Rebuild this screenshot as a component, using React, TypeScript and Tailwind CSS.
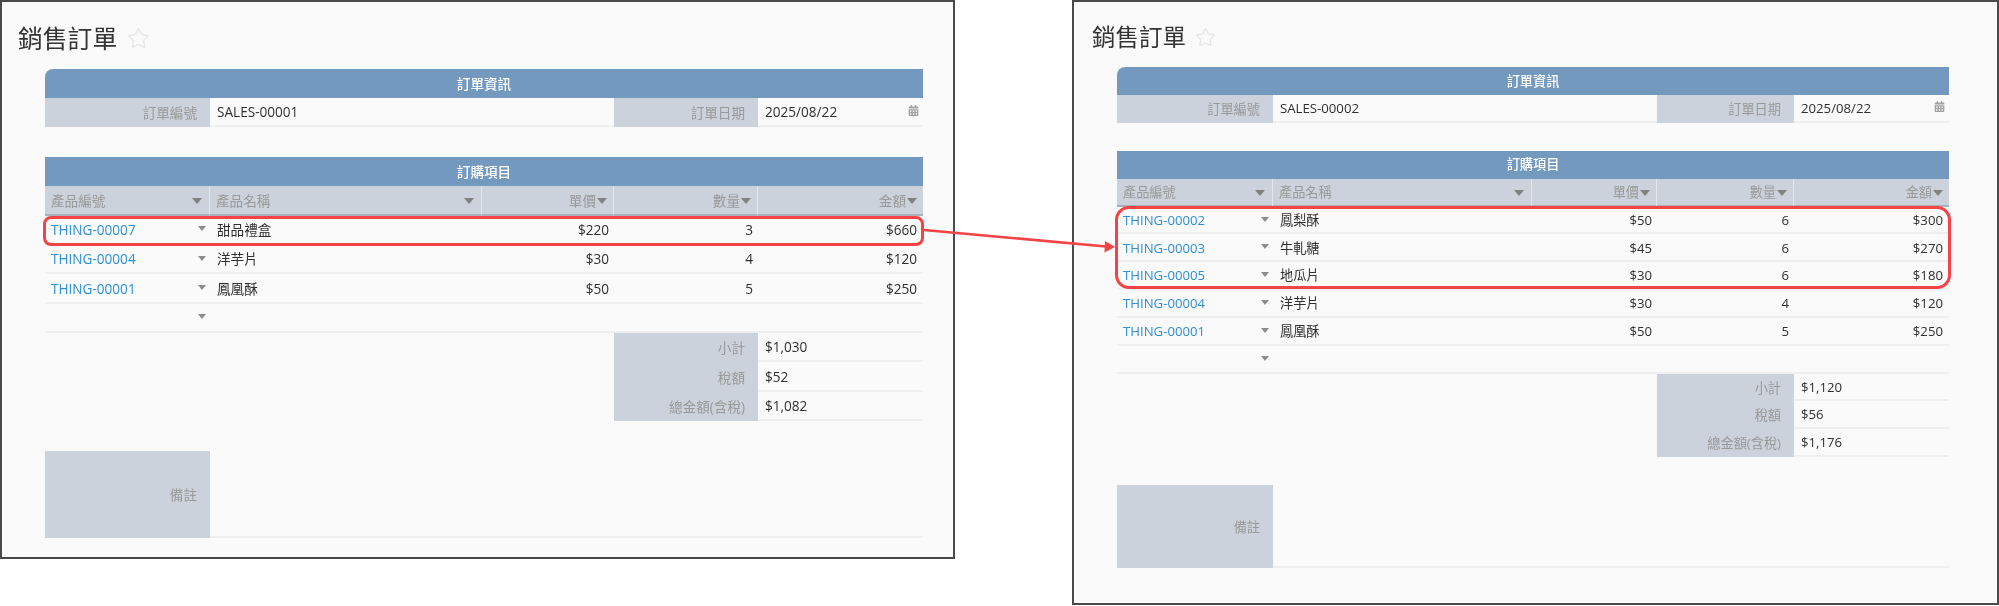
import React from 'react';
import { Star } from 'lucide-react';
import { FaCalendarAlt } from 'react-icons/fa';

type Item = { code: string; name: string; price: string; qty: string; amount: string };

type Order = {
    no: string;
    items: Item[];
    subtotal: string;
    tax: string;
    total: string;
};

const leftLook = {
    win: 'w-[955px] h-[559px]',
    head: 'h-[67px] pl-[16px] pt-[17px] gap-[10px]',
    title: 'text-[24.8px] leading-[38px]',
    star: 'mt-[8px]',
    starSize: 23,
    body: 'ml-[43px] w-[878px] text-[13.6px]',
    cols: 'grid-cols-[165px_272px_132px_144px_165px]',
    rowH: 'h-[29.33px]',
    bar: 'h-[29px]',
    gap: 'h-[30px]',
    remark: 'h-[87px]',
};

const rightLook = {
    win: 'w-[927px] h-[605px]',
    head: 'h-[65px] pl-[18px] pt-[17px] gap-[9px]',
    title: 'text-[23.5px] leading-[36px]',
    star: 'mt-[8px]',
    starSize: 21,
    body: 'ml-[43px] w-[832px] text-[13.2px]',
    cols: 'grid-cols-[156px_259px_125px_137px_155px]',
    rowH: 'h-[27.83px]',
    bar: 'h-[28px]',
    gap: 'h-[28px]',
    remark: 'h-[83px]',
};

type Look = typeof leftLook;

const orderOne: Order = {
    no: 'SALES-00001',
    items: [
        { code: 'THING-00007', name: '甜品禮盒', price: '$220', qty: '3', amount: '$660' },
        { code: 'THING-00004', name: '洋芋片', price: '$30', qty: '4', amount: '$120' },
        { code: 'THING-00001', name: '鳳凰酥', price: '$50', qty: '5', amount: '$250' },
    ],
    subtotal: '$1,030',
    tax: '$52',
    total: '$1,082',
};

const orderTwo: Order = {
    no: 'SALES-00002',
    items: [
        { code: 'THING-00002', name: '鳳梨酥', price: '$50', qty: '6', amount: '$300' },
        { code: 'THING-00003', name: '牛軋糖', price: '$45', qty: '6', amount: '$270' },
        { code: 'THING-00005', name: '地瓜片', price: '$30', qty: '6', amount: '$180' },
        { code: 'THING-00004', name: '洋芋片', price: '$30', qty: '4', amount: '$120' },
        { code: 'THING-00001', name: '鳳凰酥', price: '$50', qty: '5', amount: '$250' },
    ],
    subtotal: '$1,120',
    tax: '$56',
    total: '$1,176',
};

const Caret = ({ big }: { big?: boolean }) => (
    <span
        className={
            big
                ? 'shrink-0 border-x-[5px] border-t-[6px] border-x-transparent border-t-[#808080]'
                : 'shrink-0 border-x-4 border-t-[5px] border-x-transparent border-t-[#8c8c8c]'
        }
    />
);

const Label = ({ children, className = '' }: { children?: React.ReactNode; className?: string }) => (
    <div className={`flex items-center justify-end bg-[#cbd2db] pr-[13px] pt-[2px] text-[#999] ${className}`}>
        {children}
    </div>
);

const Value = ({ children, className = '' }: { children?: React.ReactNode; className?: string }) => (
    <div className={`flex items-center border-b-2 border-[#efefef] pl-[7px] pt-[2px] text-[#2f2f2f] ${className}`}>
        {children}
    </div>
);

const Bar = ({ text, look, round }: { text: string; look: Look; round?: boolean }) => (
    <div
        className={`flex items-center justify-center bg-[#7499bf] pt-px font-medium text-white ${look.bar} ${
            round ? 'rounded-tl-lg' : ''
        }`}
    >
        {text}
    </div>
);

const HeadCell = ({ text, look, end }: { text: string; look: Look; end?: boolean }) => (
    <div
        className={`flex items-center border-r border-[#e3e6ea] border-b-2 border-b-[#a9b0ba] bg-[#cbd2db] pt-[2px] text-[#999] last:border-r-0 ${
            look.rowH
        } ${end ? 'justify-end gap-px pr-[6px]' : 'justify-between pl-[6px] pr-[7px]'}`}
    >
        <span>{text}</span>
        <Caret big />
    </div>
);

const ItemRow = ({ item, look }: { item?: Item; look: Look }) => (
    <div className={`grid border-b-2 border-[#efefef] pt-[2px] text-[#2f2f2f] ${look.cols} ${look.rowH}`}>
        <div className="flex items-center justify-between pl-[6px] pr-[4px]">
            <span className="text-[#2d8fd5]">{item?.code}</span>
            <span className="mb-[3px] flex">
                <Caret />
            </span>
        </div>
        <div className="flex items-center pl-[7px]">{item?.name}</div>
        <div className="flex items-center justify-end pr-[5px]">{item?.price}</div>
        <div className="flex items-center justify-end pr-[5px]">{item?.qty}</div>
        <div className="flex items-center justify-end pr-[6px]">{item?.amount}</div>
    </div>
);

const SalesOrder = ({ order, look }: { order: Order; look: Look }) => (
    <div className={`shrink-0 border-2 border-[#4a4a4a] bg-[#fafafa] ${look.win}`}>
        <div className={`flex items-start ${look.head}`}>
            <h1 className={`text-[#333] ${look.title}`}>銷售訂單</h1>
            <Star size={look.starSize} strokeWidth={1.4} className={`text-[#e6e6e6] ${look.star}`} />
        </div>

        <div className={look.body}>
            <Bar text="訂單資訊" look={look} round />
            <div className={`grid ${look.cols} ${look.rowH}`}>
                <Label>訂單編號</Label>
                <Value className="col-span-2">{order.no}</Value>
                <Label>訂單日期</Label>
                <Value className="justify-between pr-[4px]">
                    <span>2025/08/22</span>
                    <FaCalendarAlt size={11} className="mb-[4px] text-[#a3a3a3]" />
                </Value>
            </div>

            <div className={look.gap} />

            <Bar text="訂購項目" look={look} />
            <div className={`grid ${look.cols}`}>
                <HeadCell text="產品編號" look={look} />
                <HeadCell text="產品名稱" look={look} />
                <HeadCell text="單價" look={look} end />
                <HeadCell text="數量" look={look} end />
                <HeadCell text="金額" look={look} end />
            </div>
            {order.items.map((item) => (
                <ItemRow key={item.code} item={item} look={look} />
            ))}
            <ItemRow look={look} />

            <div className={`grid ${look.cols}`}>
                <Label className={`col-start-4 ${look.rowH}`}>小計</Label>
                <Value>{order.subtotal}</Value>
                <Label className={`col-start-4 ${look.rowH}`}>稅額</Label>
                <Value>{order.tax}</Value>
                <Label className={`col-start-4 ${look.rowH}`}>總金額(含稅)</Label>
                <Value>{order.total}</Value>
            </div>

            <div className={look.gap} />

            <div className={`grid ${look.cols} ${look.remark}`}>
                <Label>備註</Label>
                <Value className="col-span-4" />
            </div>
        </div>
    </div>
);

export default function App() {
    return (
        <div className="relative flex h-[606px] w-[1999px] items-start justify-between bg-white blur-[0.4px] font-['Open_Sans','Noto_Sans_CJK_TC',sans-serif]">
            <SalesOrder order={orderOne} look={leftLook} />
            <SalesOrder order={orderTwo} look={rightLook} />

            {/* red callouts drawn over the two tables */}
            <div className="pointer-events-none absolute left-[43px] top-[216px] h-[30px] w-[881px] rounded-lg border-[3px] border-[#f44346]" />
            <div className="pointer-events-none absolute left-[1115px] top-[206px] h-[83px] w-[836px] rounded-[14px] border-[3px] border-[#f44346]" />
            <svg className="pointer-events-none absolute left-0 top-0" width="1999" height="606">
                <line x1="924" y1="230" x2="1106" y2="246.5" stroke="#f44346" strokeWidth="2.6" />
                <polygon points="1115,247 1105,241 1104.5,252.5" fill="#f44346" />
            </svg>
        </div>
    );
}
